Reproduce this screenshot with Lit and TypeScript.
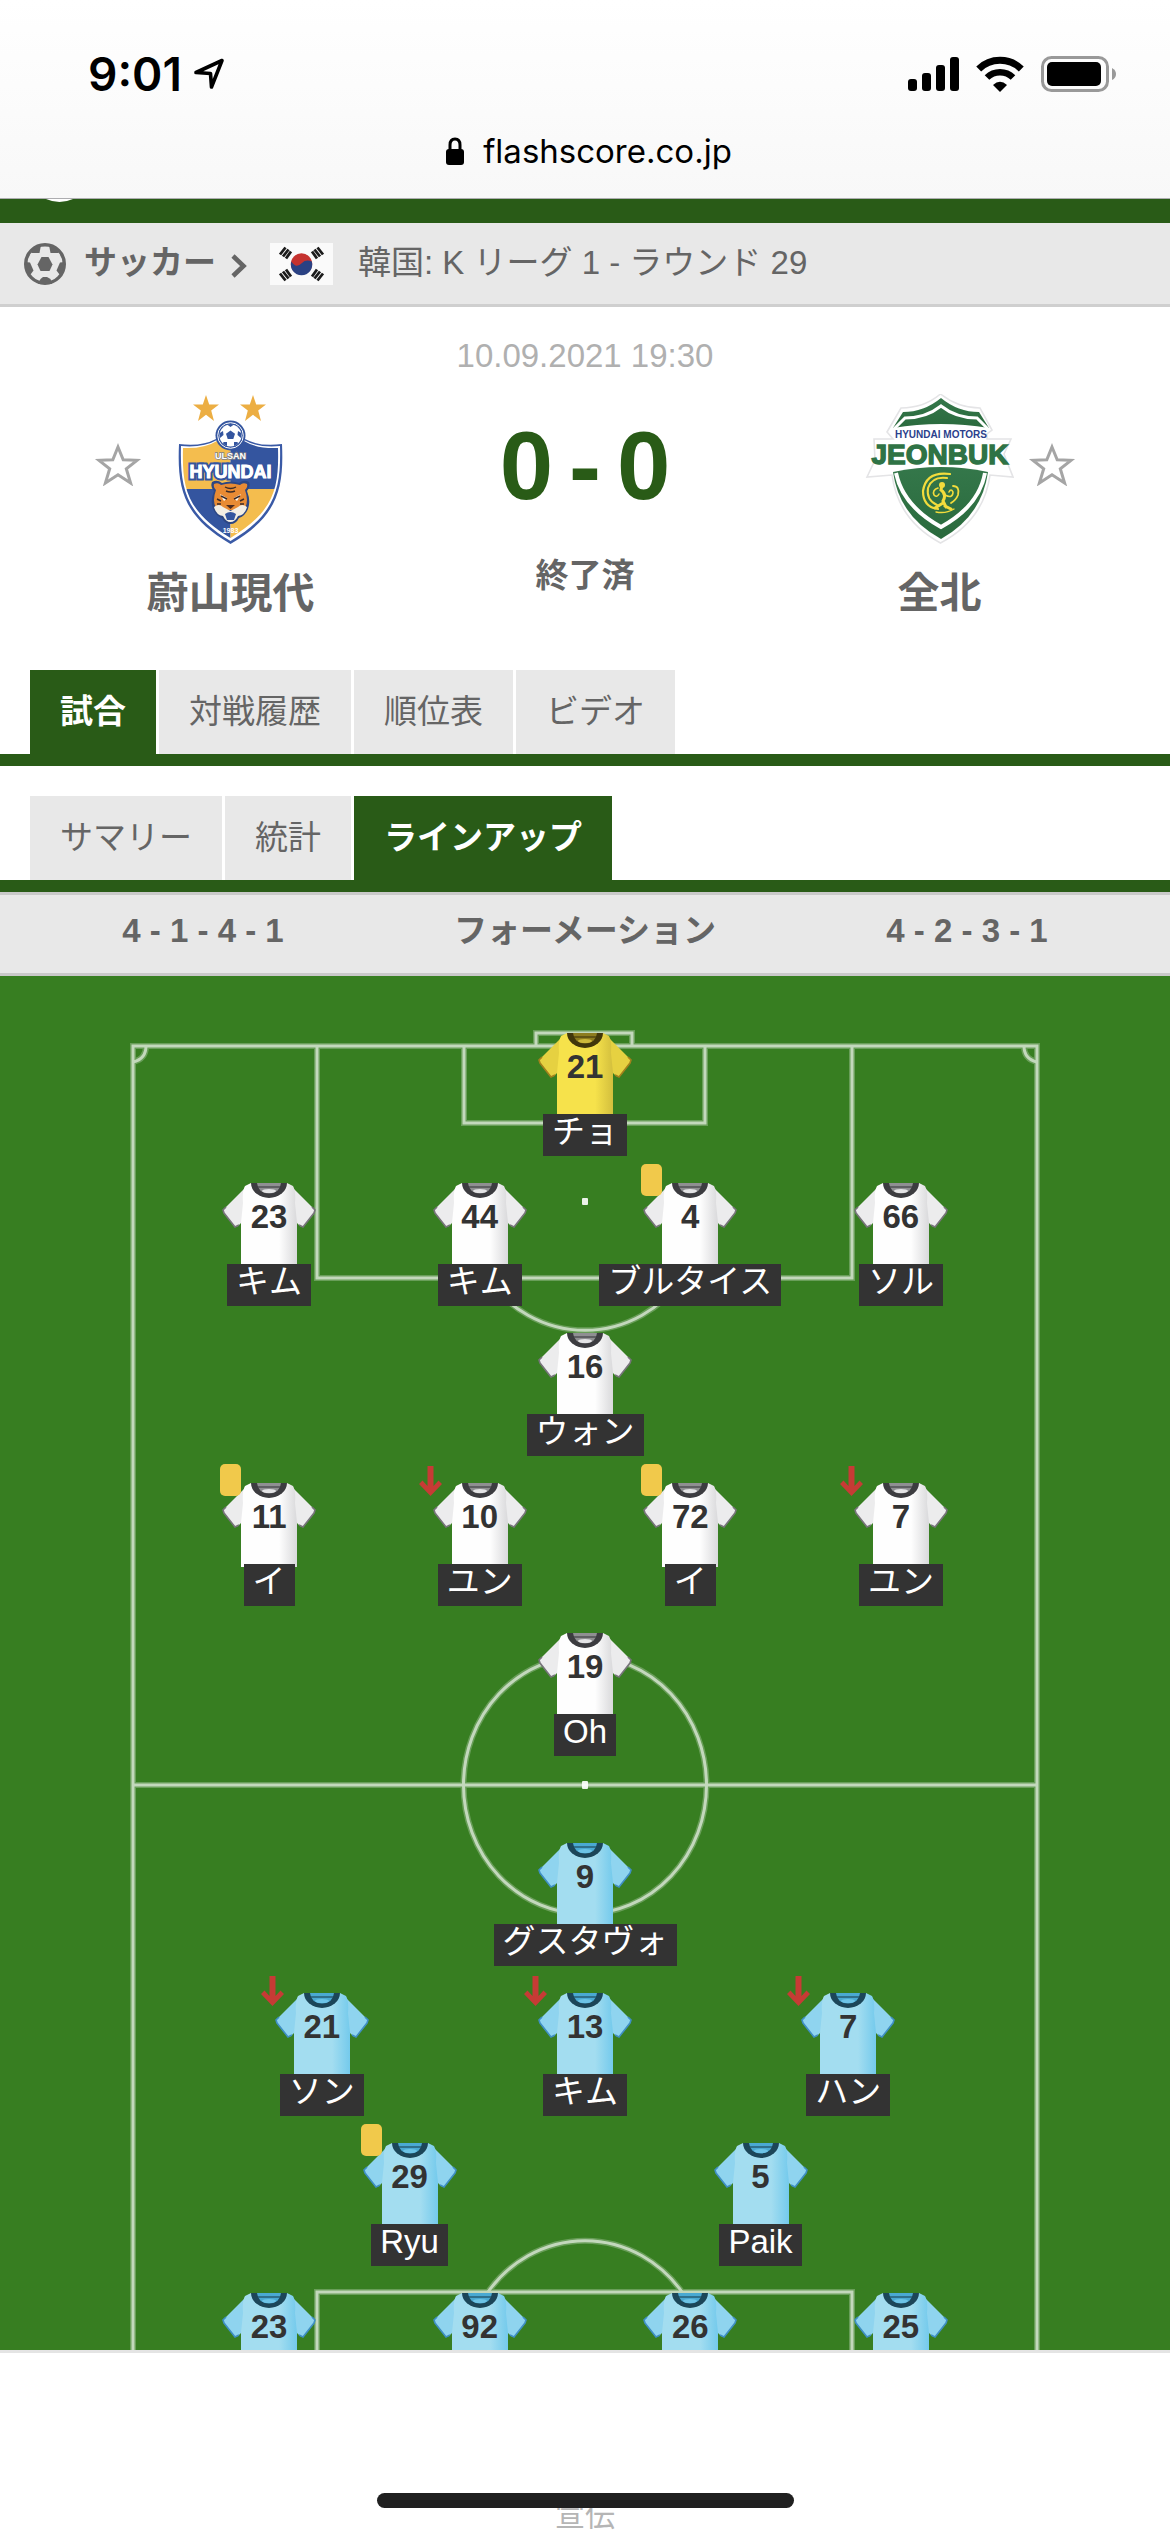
import { LitElement, html, svg, css, nothing } from "lit";
import { customElement } from "lit/decorators.js";
import { classMap } from "lit/directives/class-map.js";

type Kit = "keeper" | "home" | "away";
type Mark = "yellow" | "out";

interface Player {
  no: number;
  name: string;
  mark?: Mark;
  kit?: Kit;
}

const HOME_ROWS: Player[][] = [
  [{ no: 21, name: "チョ", kit: "keeper" }],
  [
    { no: 23, name: "キム" },
    { no: 44, name: "キム" },
    { no: 4, name: "ブルタイス", mark: "yellow" },
    { no: 66, name: "ソル" },
  ],
  [{ no: 16, name: "ウォン" }],
  [
    { no: 11, name: "イ", mark: "yellow" },
    { no: 10, name: "ユン", mark: "out" },
    { no: 72, name: "イ", mark: "yellow" },
    { no: 7, name: "ユン", mark: "out" },
  ],
  [{ no: 19, name: "Oh" }],
];

const AWAY_ROWS: Player[][] = [
  [{ no: 9, name: "グスタヴォ" }],
  [
    { no: 21, name: "ソン", mark: "out" },
    { no: 13, name: "キム", mark: "out" },
    { no: 7, name: "ハン", mark: "out" },
  ],
  [
    { no: 29, name: "Ryu", mark: "yellow" },
    { no: 5, name: "Paik" },
  ],
  [
    { no: 23, name: "" },
    { no: 92, name: "" },
    { no: 26, name: "" },
    { no: 25, name: "" },
  ],
];

const KITS: Record<Kit, { body: string; edge: string; sleeve: string; tip: string; collar: string; inner: string; shine: string }> = {
  keeper: { body: "#f6e24b", edge: "#d3bf3d", sleeve: "#e6d141", tip: "#a3801c", collar: "#41370b", inner: "#8d7d1f", shine: "#cdb93a" },
  home: { body: "#fefefe", edge: "#d9d9db", sleeve: "#ececed", tip: "#77747a", collar: "#3c3c40", inner: "#8f8f92", shine: "#e4e4e6" },
  away: { body: "#a3ddf0", edge: "#74caec", sleeve: "#8fd4ef", tip: "#3f8fc4", collar: "#1c4659", inner: "#4aa9d2", shine: "#6cc3e6" },
};

const gradients = (Object.keys(KITS) as Kit[]).map(
  (k) => svg`<linearGradient id="fabric-${k}" x1="0" x2="1" y1="0" y2="0">
    <stop offset="0" stop-color=${KITS[k].body}></stop>
    <stop offset="0.68" stop-color=${KITS[k].body}></stop>
    <stop offset="1" stop-color=${KITS[k].edge}></stop>
  </linearGradient>`
);

const shirt = (kit: Kit) => {
  const c = KITS[kit];
  return html`<svg class="shirt" viewBox="0 0 94 84" aria-hidden="true">
    <path d="M25 3 L1 27 L2 30 L13 44 L16 43 L21 38 Z" fill=${c.sleeve}></path>
    <path d="M69 3 L93 27 L92 30 L81 44 L78 43 L73 38 Z" fill=${c.sleeve}></path>
    <path d="M4 24 L1 27 L2 30 L13 44 L17 42 M90 24 L93 27 L92 30 L81 44 L77 42" fill="none" stroke=${c.tip} stroke-width="1.600"></path>
    <path d="M29 0 L23 3 Q20 8 21 20 L19 40 V84 H75 V40 L73 20 Q74 8 71 3 L65 0 Z" fill="url(#fabric-${kit})"></path>
    <path d="M29 0 A18 15 0 0 0 65 0 Z" fill=${c.collar}></path>
    <path d="M35 0 Q36 10 47 10.500 Q58 10 59 0 Z" fill=${c.inner}></path>
    <path d="M35 4 H59" stroke=${c.collar} stroke-width="1.600" opacity="0.700"></path>
    <ellipse cx="47" cy="8" rx="7" ry="2" fill=${c.shine}></ellipse>
  </svg>`;
};

const mark = (m?: Mark) =>
  m === "yellow"
    ? html`<span class="card" role="img" aria-label="イエローカード"></span>`
    : m === "out"
      ? html`<svg class="out" viewBox="0 0 23 30" role="img" aria-label="交代">
          <path d="M8.500 0 H14.500 V20 L19.500 14.500 L23 18 L11.500 30 L0 18 L3.500 14.500 L8.500 20 Z" fill="#c63b35"></path>
        </svg>`
      : nothing;

const starIcon = html`<svg viewBox="0 0 48 44" class="star-icon" aria-hidden="true">
  <path d="M24 5 L29.200 17.800 L43 18.300 L32.300 26.800 L36.600 41 L24 32.800 L11.400 41 L15.700 26.800 L5 18.300 L18.800 17.800 Z"
    fill="none" stroke="#a5a5a5" stroke-width="3"></path>
</svg>`;

const ulsanCrest = html`<svg class="crest" viewBox="-23 -1 150 150" role="img" aria-label="蔚山現代">
  <defs>
    <clipPath id="ulsan-clip"><path d="M4 53 Q25 54 38 46 H65 Q78 54 99 53 C100 92 96 116 51.500 143 C7 116 3 92 4 53 Z"></path></clipPath>
  </defs>
  <g fill="#ecae43">
    <path d="M27 0 L30.200 9.500 H40 L32.200 15.600 L35 26 L27 19.800 L19 26 L21.800 15.600 L14 9.500 H23.800 Z"></path>
    <path d="M74 0 L77.200 9.500 H87 L79.200 15.600 L82 26 L74 19.800 L66 26 L68.800 15.600 L61 9.500 H70.800 Z"></path>
  </g>
  <path d="M0 49 Q22 52 37 44 H66 Q81 52 103 49 C105 94 99 121 51.500 149 C4 121 -2 94 0 49 Z" fill="#3a5aa6"></path>
  <path d="M2 51 Q24 53 38 45 H65 Q79 53 101 51 C102 93 97 119 51.500 146 C6 119 1 93 2 51 Z" fill="#fff"></path>
  <g clip-path="url(#ulsan-clip)">
    <rect x="0" y="40" width="51.500" height="54" fill="#f4bd4e"></rect>
    <rect x="51.500" y="40" width="52" height="54" fill="#34559f"></rect>
    <rect x="0" y="94" width="51.500" height="56" fill="#34559f"></rect>
    <rect x="51.500" y="94" width="52" height="56" fill="#f4bd4e"></rect>
  </g>
  <circle cx="51.500" cy="40.500" r="15" fill="#34559f"></circle>
  <circle cx="51.500" cy="40.500" r="12.800" fill="#34559f" stroke="#fff" stroke-width="1"></circle>
  <circle cx="51.500" cy="40.500" r="11" fill="#fff"></circle>
  <g fill="#34559f">
    <path d="M51.500 35.500 L56 38.800 L54.300 44 H48.700 L47 38.800 Z"></path>
    <path d="M48 29.500 Q51.500 28.500 55 29.500 L51.500 32 Z"></path>
    <path d="M40.800 38 L44 36 L44.500 40 L41 43 Z"></path>
    <path d="M62.200 38 L59 36 L58.500 40 L62 43 Z"></path>
    <path d="M44.500 47 L48 47 L48 51 Q45.500 50 44 48.500 Z"></path>
    <path d="M58.500 47 L55 47 L55 51 Q57.500 50 59 48.500 Z"></path>
  </g>
  <text x="51.500" y="64" class="crest-text outlined" font-size="9" fill="#fff" stroke="#7d7f86" stroke-width="1.400">ULSAN</text>
  <text x="51.500" y="83" class="crest-text outlined" font-size="18" fill="#fff" stroke="#34559f" stroke-width="5">HYUNDAI</text>
  <text x="51.500" y="83" class="crest-text" font-size="18" fill="#fff" stroke="#fff" stroke-width="0.800">HYUNDAI</text>
  <path d="M33 87 Q38 84 43 88 Q51.500 85 60 88 Q65 84 70 87 Q72 92 68 96 Q72 106 69 114 Q66 121 60 123 Q57 129 51.500 129 Q46 129 43 123 Q37 121 34 114 Q31 106 35 96 Q31 92 33 87 Z" fill="#2c4683"></path>
  <path d="M35 89 Q39 87 42 90 Q51.500 87 61 90 Q64 87 68 89 Q69 92 66 95 Q70 106 66 113 L58 115 H45 L37 113 Q33 106 37 95 Q34 92 35 89 Z" fill="#e88b34"></path>
  <path d="M35 112 Q40 108 44 112 L51.500 116 L59 112 Q63 108 68 112 Q66 120 59 121 Q56 127 51.500 127 Q47 127 44 121 Q37 120 35 112 Z" fill="#f3eee4"></path>
  <path d="M41 99 L48 103 L45 106 Z M62 99 L55 103 L58 106 Z" fill="#fff"></path>
  <path d="M42 101 L48 104 M61 101 L55 104 M46 92 Q51.500 95 57 92 M47 96 Q51.500 98 56 96 M38 104 L42 106 M65 104 L61 106 M38 109 L42 109 M65 109 L61 109" stroke="#3b2b28" stroke-width="1.400" fill="none"></path>
  <path d="M47 110 H56 L51.500 114 Z" fill="#4c2b20"></path>
  <path d="M46 119 Q51.500 115 57 119 L55 125 H48 Z" fill="#34559f"></path>
  <text x="51.500" y="138" class="crest-text" font-size="7" fill="#fff">1983</text>
</svg>`;

const jeonbukCrest = html`<svg class="crest" viewBox="-2 0 150 150" role="img" aria-label="全北">
  <defs>
    <linearGradient id="jb-green" x1="0" x2="0" y1="0" y2="1">
      <stop offset="0" stop-color="#34774a"></stop>
      <stop offset="1" stop-color="#2a6a3d"></stop>
    </linearGradient>
  </defs>
  <path d="M74.500 0 Q92 14 114 14 L126 36 L121 40 V45 L145 45 L138 60 L147 83 L124 81 Q118 126 74.500 149 Q32 126 26 81 L1 83 L9 66 L8 45 L27 45 L21 38 L35 14 Q58 14 74.500 0 Z" fill="#fff" stroke="#e4e4e6" stroke-width="1.600"></path>
  <path d="M75 4 Q92 18 113 18 L123 34 Q75 26 27 34 L37 18 Q58 18 75 4 Z" fill="url(#jb-green)"></path>
  <path d="M28 35 L39 24 Q60 24 75 12 Q90 24 111 24 L122 35" fill="none" stroke="#fff" stroke-width="3"></path>
  <path d="M27 78 Q75 68 122 78 Q116 122 75 145 Q33 122 27 78 Z" fill="url(#jb-green)"></path>
  <path d="M30 79 Q37 112 75 133 Q113 112 119 79" fill="none" stroke="#fff" stroke-width="4"></path>
  <text x="75" y="44" class="crest-text" font-size="10" fill="#2b3f8c">HYUNDAI MOTORS</text>
  <text x="74" y="70" class="crest-text" font-size="28" fill="#2f7345" stroke="#2f7345" stroke-width="1.400">JEONBUK</text>
  <g fill="none" stroke="#f3dc3c" stroke-linecap="round">
    <path d="M84 80 Q60 77 57 97 Q57 113 72 115" stroke-width="2.200"></path>
    <path d="M81 84 Q66 82 62 94 Q60 106 71 111" stroke-width="2"></path>
    <path d="M72 94 Q66 96 68 101 Q71 104 73 100" stroke-width="1.600"></path>
    <path d="M76 91 L75 96 Q81 100 77 107 L80 113 M77 109 L69 114 M79 112 L85 115" stroke-width="3"></path>
    <path d="M79 101 Q87 105 87 98 Q85 94 83 98" stroke-width="1.600"></path>
    <path d="M87 92 Q94 92 92 101 Q90 106 85 109" stroke-width="1.800"></path>
    <path d="M70 118 Q80 120 88 115" stroke-width="1.400"></path>
  </g>
  <circle cx="76" cy="91" r="3" fill="#f3dc3c"></circle>
</svg>`;

const pitchLines = svg`
  <path d="M133 1374 V70 H1037 V1374" />
  <path d="M536 70 V57 H632 V70" />
  <path d="M317 70 V302 H852 V70 M464 70 V147 H705 V70" />
  <path d="M146 70 Q146 83 133 86 M1024 70 Q1024 83 1037 86" />
  <path d="M133 809 H1037" />
  <ellipse cx="585" cy="809" rx="121.500" ry="129" />
  <path d="M488 303 A121.500 129 0 0 0 682 303" />
  <path d="M317 1374 V1316 H852 V1374" />
  <path d="M488 1316 A121.500 129 0 0 1 682 1316" />`;

@customElement("app-root")
export class AppRoot extends LitElement {
  static styles = css`
    :host {
      display: block;
      position: relative;
      background: #fff;
      color: #656565;
      font: 33px/36px "Liberation Sans", "Noto Sans CJK JP", sans-serif;
    }
    * { box-sizing: border-box; }
    svg { display: block; }
    a { color: inherit; text-decoration: none; }

    .browser {
      display: flex;
      flex-direction: column;
      padding-top: 44px;
      background: linear-gradient(#fff, #f8f8f8);
      border-bottom: 1px solid #adadb0;
      color: #000;
      font-family: Inter, sans-serif;
    }
    .status { display: flex; align-items: center; height: 60px; padding: 0 54px 0 88px; }
    .time { font-size: 46px; font-weight: 600; line-height: 60px; }
    .location { width: 31px; height: 32px; margin-left: 12px; }
    .system { display: flex; align-items: center; gap: 17px; margin-left: auto; }
    .address { display: flex; align-items: center; justify-content: center; gap: 18px; height: 94px; padding-left: 7px; font-size: 33px; }
    .lock { width: 20px; height: 28px; }

    .strip { height: 24px; padding-left: 46px; background: #295b17; }
    .crumbs {
      display: flex;
      align-items: center;
      height: 84px;
      padding: 0 24px;
      background: #e8e8e8;
      border-bottom: 3px solid #cfcfcf;
    }
    .sport { display: flex; align-items: center; gap: 18px; font-weight: 700; }
    .crumb { padding-bottom: 2px; }
    .chevron { width: 16px; height: 24px; margin: 4px 23px 0 15px; }
    .flag { width: 63px; height: 42px; margin-right: 25px; }

    .match { padding: 31px 8% 52px; }
    .date { color: #b0b0b0; text-align: center; }
    .teams { display: flex; justify-content: space-between; margin-top: 20px; }
    .team { display: grid; grid-template-columns: 48px 174px; column-gap: 2px; justify-items: center; }
    .team.away { grid-template-columns: 174px 48px; }
    .favorite { align-self: start; margin: 48px 0 0; padding: 0; border: 0; background: none; cursor: pointer; }
    .star-icon { width: 48px; height: 44px; }
    .crest { width: 150px; height: 150px; }
    .crest-text { font-family: "Liberation Sans", sans-serif; font-weight: 700; text-anchor: middle; }
    .outlined { paint-order: stroke; }
    .team-name { grid-column: 2; margin: 26px 0 0; font-size: 42px; line-height: 48px; font-weight: 700; white-space: nowrap; }
    .team.away .team-name { grid-column: 1; }
    .result { padding-top: 24px; text-align: center; font-weight: 700; }
    .score { display: flex; justify-content: center; gap: 16px; color: #295b17; font-size: 96px; line-height: 96px; }
    .state { margin-top: 44px; }

    .tabs { display: flex; gap: 3px; padding: 0 30px; border-bottom: 12px solid #295b17; }
    .tabs.sub { margin-top: 30px; }
    .tab { padding: 24px 30px; background: #e8e8e8; white-space: nowrap; }
    .tab.active { background: #295b17; color: #fff; font-weight: 700; }

    .formation {
      display: grid;
      grid-template-columns: repeat(3, 1fr);
      padding: 18px 12px 24px;
      background: #e8e8e8;
      border: solid #c9c9c9;
      border-width: 3px 0;
      text-align: center;
      font-weight: 700;
    }

    .pitch {
      position: relative;
      overflow: hidden;
      padding: 57px 5% 0;
      background: #377e21;
      border-bottom: 3px solid #e4e4e4;
    }
    .lines { position: absolute; inset: 0; width: 100%; height: 100%; }
    .side { position: relative; }
    .side.away { margin-top: 60px; }
    .row { display: flex; height: 150px; }
    .row.partial { height: 57px; }
    .row::before, .row::after { content: ""; flex: 0.5 0 0; }
    .player {
      position: relative;
      display: flex;
      flex: 1 0 0;
      flex-direction: column;
      align-items: center;
      min-width: 0;
      color: #333;
    }
    .jersey { display: grid; justify-items: center; height: 81px; }
    .jersey > * { grid-area: 1 / 1; }
    .shirt { width: 94px; height: 84px; }
    .number { padding-top: 16px; font-weight: 700; }
    .name { z-index: 1; height: 42px; padding: 0 9px; background: #333; color: #fff; white-space: nowrap; }
    .card { position: absolute; top: -19px; left: calc(50% - 49px); width: 21px; height: 32px; border-radius: 5px; background: #f1c94b; }
    .out { position: absolute; top: -17px; left: calc(50% - 61px); width: 23px; height: 30px; }

    .ad { padding-top: 146px; color: #b5b5b5; font-size: 30px; line-height: 33px; text-align: center; }
    .home-bar {
      position: absolute;
      bottom: 24px;
      left: 50%;
      width: 417px;
      height: 15px;
      margin-left: -208px;
      border-radius: 8px;
      background: #202020;
    }
  `;

  private renderPlayer(p: Player, side: Kit) {
    return html`<a class="player" href="#player">
      <span class="jersey">${shirt(p.kit ?? side)}<span class="number">${p.no}</span></span>
      ${p.name ? html`<span class="name">${p.name}</span>` : nothing}
      ${mark(p.mark)}
    </a>`;
  }

  private renderRows(rows: Player[][], side: Kit) {
    return rows.map(
      (row) => html`<div class=${classMap({ row: true, partial: !row[0].name })}>
        ${row.map((p) => this.renderPlayer(p, side))}
      </div>`
    );
  }

  private renderTabs(labels: string[], active: string, sub = false) {
    return html`<nav class=${classMap({ tabs: true, sub })}>
      ${labels.map((l) => html`<a href="#tab" class=${classMap({ tab: true, active: l === active })}>${l}</a>`)}
    </nav>`;
  }

  render() {
    return html`
      <header class="browser">
        <div class="status">
          <span class="time">9:01</span>
          <svg class="location" viewBox="0 0 31 32" aria-hidden="true">
            <path d="M2 14.500 L28 2.500 L17.500 29 L16.500 15.500 Z" fill="none" stroke="#000" stroke-width="3.600" stroke-linejoin="round"></path>
          </svg>
          <div class="system">
            <svg width="51" height="34" viewBox="0 0 51 34" aria-hidden="true">
              <rect x="0" y="22" width="9" height="12" rx="3"></rect>
              <rect x="14" y="16" width="9" height="18" rx="3"></rect>
              <rect x="28" y="8" width="9" height="26" rx="3"></rect>
              <rect x="42" y="0" width="9" height="34" rx="3"></rect>
            </svg>
            <svg width="48" height="36" viewBox="0 0 48 36" aria-hidden="true">
              <path d="M2.700 13 A30.500 30.500 0 0 1 45.300 13" fill="none" stroke="#000" stroke-width="7"></path>
              <path d="M11 21.500 A18.500 18.500 0 0 1 37 21.500" fill="none" stroke="#000" stroke-width="6.500"></path>
              <path d="M24 36 L17 29 Q24 22.500 31 29 Z"></path>
            </svg>
            <svg width="75" height="36" viewBox="0 0 75 36" aria-hidden="true">
              <rect x="1.500" y="1.500" width="65" height="33" rx="9" fill="none" stroke="#999" stroke-width="3"></rect>
              <rect x="6" y="6" width="54" height="24" rx="5"></rect>
              <path d="M71 12 Q75 14 75 18 Q75 22 71 24 Z" fill="#999"></path>
            </svg>
          </div>
        </div>
        <div class="address">
          <svg class="lock" viewBox="0 0 20 28" aria-hidden="true">
            <path d="M5 13 V8 Q5 2 10 2 Q15 2 15 8 V13" fill="none" stroke="#000" stroke-width="3"></path>
            <rect x="1" y="12" width="18" height="16" rx="3"></rect>
          </svg>
          <span>flashscore.co.jp</span>
        </div>
      </header>

      <div class="strip">
        <svg width="27" height="3" viewBox="0 0 27 3" aria-hidden="true"><path d="M0 0 Q13.500 6 27 0 Z" fill="#fff"></path></svg>
      </div>

      <nav class="crumbs">
        <a class="sport" href="#soccer">
          <svg width="42" height="42" viewBox="0 0 42 42" aria-hidden="true">
            <circle cx="21" cy="21" r="19.300" fill="none" stroke="#656565" stroke-width="3.400"></circle>
            <g fill="#656565">
              <path d="M17.500 14 H24.500 L28.500 21.500 L25.500 28 H16.500 L13.500 21.500 Z"></path>
              <path d="M17 2 L15.500 10 H7.500 L7 7 Z M25 2 L26.500 10 H34.500 L35 7 Z"></path>
              <path d="M1 19 L6 19.500 L9.500 27.500 L6.500 31.500 L3 29 Z M41 19 L36 19.500 L32.500 27.500 L35.500 31.500 L39 29 Z"></path>
              <path d="M16.500 36 L19 34 H23 L26.500 36 L28 41 H14 Z"></path>
            </g>
          </svg>
          <span class="crumb">サッカー</span>
        </a>
        <svg class="chevron" viewBox="0 0 16 24" aria-hidden="true">
          <path d="M2 2 L12.500 12 L2 22" fill="none" stroke="#656565" stroke-width="4.600"></path>
        </svg>
        <svg class="flag" viewBox="0 0 63 42" role="img" aria-label="韓国">
          <rect width="63" height="42" fill="#fafafa"></rect>
          <circle cx="31.500" cy="21" r="10.700" fill="#c5322f"></circle>
          <path d="M21.300 18.500 A10.700 10.700 0 1 0 41.800 18.500 Q36 16 32 20 Q26 26 21.300 18.500 Z" fill="#2a4183"></path>
          <g stroke="#1c1c1c" stroke-width="2.800">
            <path d="M10 11.500 L15.500 4.500 M13 13.500 L18.500 6.500 M16 15.500 L21 8.500"></path>
            <path d="M53 11.500 L47.500 4.500 M50 13.500 L44.500 6.500 M47 15.500 L42 8.500"></path>
            <path d="M10 30.500 L15.500 37.500 M13 28.500 L18.500 35.500 M16 26.500 L21 33.500"></path>
            <path d="M53 30.500 L47.500 37.500 M50 28.500 L44.500 35.500 M47 26.500 L42 33.500"></path>
          </g>
        </svg>
        <a class="crumb" href="#league">韓国: K リーグ 1 - ラウンド 29</a>
      </nav>

      <section class="match">
        <div class="date">10.09.2021 19:30</div>
        <div class="teams">
          <div class="team">
            <button class="favorite" aria-label="お気に入り">${starIcon}</button>
            ${ulsanCrest}
            <h2 class="team-name">蔚山現代</h2>
          </div>
          <div class="result">
            <div class="score"><span>0</span><span>-</span><span>0</span></div>
            <div class="state">終了済</div>
          </div>
          <div class="team away">
            ${jeonbukCrest}
            <button class="favorite" aria-label="お気に入り">${starIcon}</button>
            <h2 class="team-name">全北</h2>
          </div>
        </div>
      </section>

      ${this.renderTabs(["試合", "対戦履歴", "順位表", "ビデオ"], "試合")}
      ${this.renderTabs(["サマリー", "統計", "ラインアップ"], "ラインアップ", true)}

      <div class="formation">
        <span>4 - 1 - 4 - 1</span><span>フォーメーション</span><span>4 - 2 - 3 - 1</span>
      </div>

      <main class="pitch">
        <svg class="lines" viewBox="0 0 1170 1374" preserveAspectRatio="xMidYMin slice" aria-hidden="true">
          <defs>${gradients}</defs>
          <g fill="none" stroke="#fff" stroke-width="6" opacity="0.250">${pitchLines}</g>
          <g fill="none" stroke="#fff" stroke-width="3" opacity="0.600">${pitchLines}</g>
          <g fill="#fff" opacity="0.900">
            <rect x="582" y="222" width="6" height="7" rx="1"></rect>
            <rect x="582" y="805" width="6" height="8" rx="1"></rect>
          </g>
        </svg>
        <div class="side">${this.renderRows(HOME_ROWS, "home")}</div>
        <div class="side away">${this.renderRows(AWAY_ROWS, "away")}</div>
      </main>

      <footer class="ad">宣伝</footer>
      <div class="home-bar"></div>
    `;
  }
}
